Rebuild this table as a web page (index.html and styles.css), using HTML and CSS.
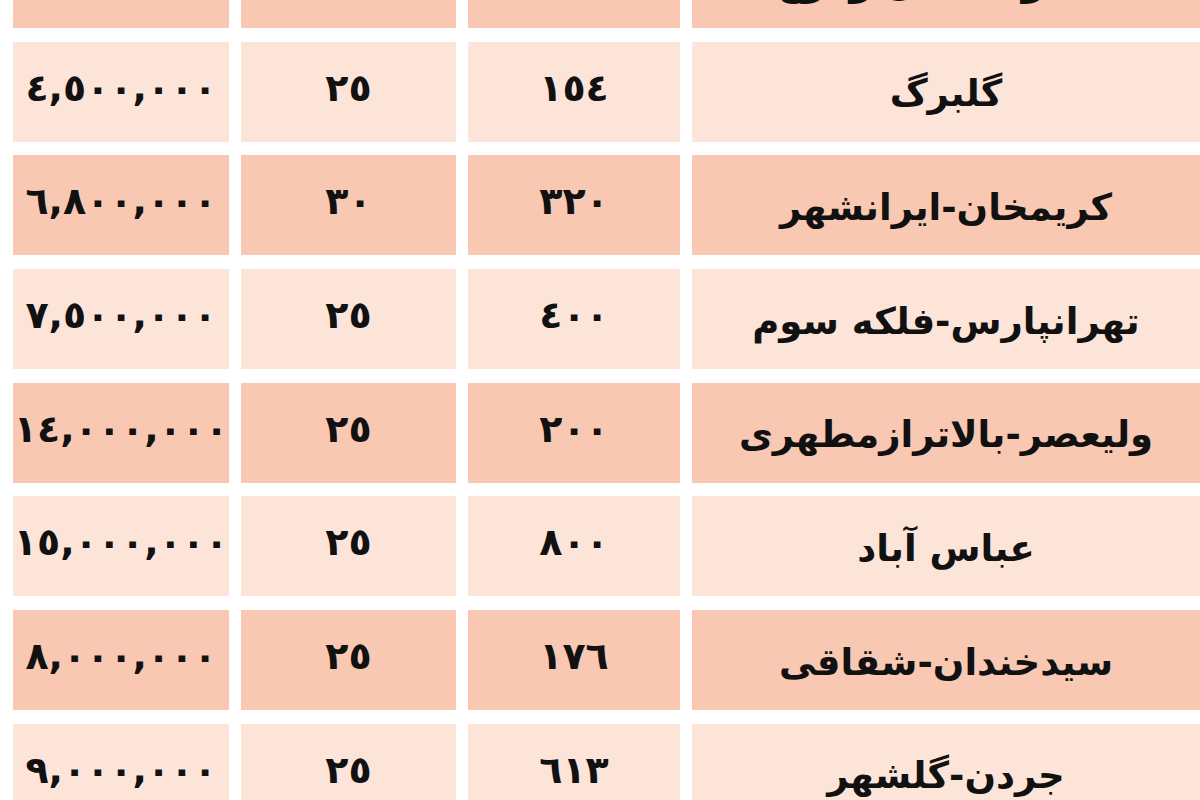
FILE: index.html
```html
<!DOCTYPE html>
<html lang="fa" dir="rtl">
<head>
<meta charset="utf-8">
<title>جدول اجاره</title>
<link rel="stylesheet" href="styles.css">
</head>
<body>
<div class="sheet">
  <div class="table">
    <div class="cell dark name head">محدوده محل وقوع</div>
    <div class="cell dark num head">متراژ</div>
    <div class="cell dark num head">سن بنا</div>
    <div class="cell dark num head">اجاره ماهانه</div>

    <div class="cell light name">گلبرگ</div>
    <div class="cell light num">١٥٤</div>
    <div class="cell light num">٢٥</div>
    <div class="cell light num">٤,٥٠٠,٠٠٠</div>

    <div class="cell dark name">کریمخان-ایرانشهر</div>
    <div class="cell dark num">٣٢٠</div>
    <div class="cell dark num">٣٠</div>
    <div class="cell dark num">٦,٨٠٠,٠٠٠</div>

    <div class="cell light name">تهرانپارس-فلکه سوم</div>
    <div class="cell light num">٤٠٠</div>
    <div class="cell light num">٢٥</div>
    <div class="cell light num">٧,٥٠٠,٠٠٠</div>

    <div class="cell dark name">ولیعصر-بالاترازمطهری</div>
    <div class="cell dark num">٢٠٠</div>
    <div class="cell dark num">٢٥</div>
    <div class="cell dark num">١٤,٠٠٠,٠٠٠</div>

    <div class="cell light name">عباس آباد</div>
    <div class="cell light num">٨٠٠</div>
    <div class="cell light num">٢٥</div>
    <div class="cell light num">١٥,٠٠٠,٠٠٠</div>

    <div class="cell dark name">سیدخندان-شقاقی</div>
    <div class="cell dark num">١٧٦</div>
    <div class="cell dark num">٢٥</div>
    <div class="cell dark num">٨,٠٠٠,٠٠٠</div>

    <div class="cell light name">جردن-گلشهر</div>
    <div class="cell light num">٦١٣</div>
    <div class="cell light num">٢٥</div>
    <div class="cell light num">٩,٠٠٠,٠٠٠</div>
  </div>
</div>
</body>
</html>
```
FILE: styles.css
```css
html, body {
  margin: 0;
  padding: 0;
  background: #ffffff;
  overflow: hidden;
  height: 800px;
}

body {
  font-family: "DejaVu Sans", sans-serif;
  color: #111111;
}

.sheet {
  padding-left: 13px;
  margin-top: -72px;
}

.table {
  display: grid;
  grid-template-columns: 1fr 212px 215px 216px;
  grid-auto-rows: 100px;
  column-gap: 12px;
  row-gap: 13.7px;
}

.cell {
  display: flex;
  align-items: center;
  justify-content: center;
  white-space: nowrap;
  overflow: hidden;
  box-sizing: border-box;
}

.light {
  background: #fce4d9;
}

.dark {
  background: #f9c8b2;
}

.num {
  font-size: 38px;
  font-weight: bold;
  padding-bottom: 8px;
}

.name {
  font-size: 37px;
  font-weight: bold;
  padding-top: 4px;
}

.head {
  align-items: flex-end;
  padding-top: 0;
}

.name.head {
  padding-bottom: 24px;
}

.num.head {
  padding-bottom: 46px;
}
```
